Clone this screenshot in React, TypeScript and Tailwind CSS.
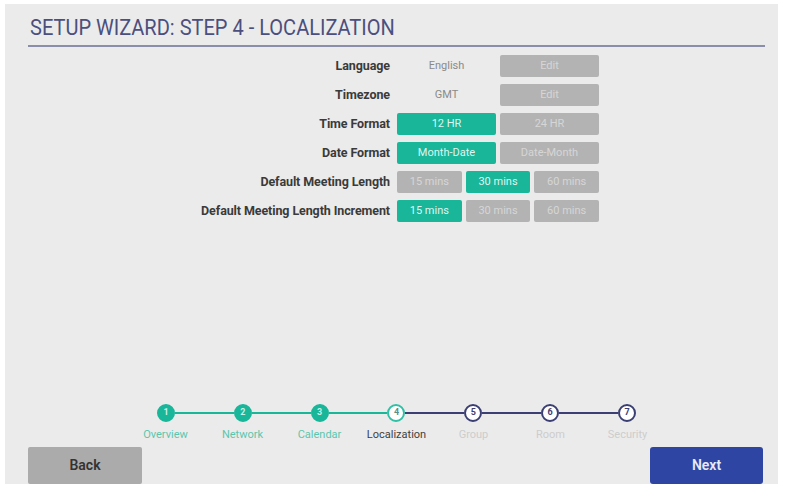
import React from "react";

const teal = "bg-[#19b69a] text-[#dff5ef]";
const gray = "bg-[#b3b3b3] text-[#d6d6d6]";

type Opt = { label: string; on?: boolean };

function Choice({ opts }: { opts: Opt[] }) {
  return (
    <div className={opts.length === 3 ? "grid grid-cols-3 gap-1" : "grid grid-cols-2 gap-1"}>
      {opts.map((o) => (
        <div
          key={o.label}
          className={`flex h-[22px] items-center justify-center rounded-[2px] text-[11px] ${o.on ? teal : gray}`}
        >
          {o.label}
        </div>
      ))}
    </div>
  );
}

function Row({ label, children }: { label: string; children: React.ReactNode }) {
  return (
    <div className="grid grid-cols-[362px_202px] items-center gap-[7px]">
      <div className="text-right text-[12.5px] font-bold tracking-[-0.1px] text-[#3a3a3a]">{label}</div>
      {children}
    </div>
  );
}

const steps = [
  { n: 1, name: "Overview", state: "done" },
  { n: 2, name: "Network", state: "done" },
  { n: 3, name: "Calendar", state: "done" },
  { n: 4, name: "Localization", state: "current" },
  { n: 5, name: "Group", state: "todo" },
  { n: 6, name: "Room", state: "todo" },
  { n: 7, name: "Security", state: "todo" },
];

function Dot({ n, state }: { n: number; state: string }) {
  const cls =
    state === "done"
      ? "bg-[#19b69a] border-[#19b69a] text-[#c9f0e5]"
      : state === "current"
        ? "bg-white border-[#2fc0a5] text-[#5a8f86]"
        : "bg-white border-[#3b3f73] text-[#3b3f73]";
  return (
    <div className={`flex h-[18px] w-[18px] shrink-0 items-center justify-center rounded-full border-2 text-[9px] font-bold ${cls}`}>
      {n}
    </div>
  );
}

export default function App() {
  return (
    <div
      className="h-[487px] w-[787px] bg-white pb-[3px] pl-[5px] pr-[9px] pt-[4px]"
      style={{ fontFamily: "Roboto, 'Liberation Sans', sans-serif" }}
    >
      <div className="flex h-full flex-col bg-[#ebebeb] pl-[23px] pr-[13px]">
        <div className="mt-[11px] border-b-2 border-[#8a8eab] pb-[4px] pl-[2px]">
          <h1 className="origin-left scale-x-[0.91] whitespace-nowrap text-[22px] leading-[26px] text-[#4b4f7e]">
            SETUP WIZARD: STEP 4 - LOCALIZATION
          </h1>
        </div>

        <div className="mt-[8px] flex flex-col gap-[7px]">
          <Row label="Language">
            <div className="grid grid-cols-2 gap-1">
              <div className="flex h-[22px] items-center justify-center text-[11px] text-[#8a8a8a]">English</div>
              <div className={`flex h-[22px] items-center justify-center rounded-[2px] text-[11px] ${gray}`}>Edit</div>
            </div>
          </Row>
          <Row label="Timezone">
            <div className="grid grid-cols-2 gap-1">
              <div className="flex h-[22px] items-center justify-center text-[11px] text-[#8a8a8a]">GMT</div>
              <div className={`flex h-[22px] items-center justify-center rounded-[2px] text-[11px] ${gray}`}>Edit</div>
            </div>
          </Row>
          <Row label="Time Format">
            <Choice opts={[{ label: "12 HR", on: true }, { label: "24 HR" }]} />
          </Row>
          <Row label="Date Format">
            <Choice opts={[{ label: "Month-Date", on: true }, { label: "Date-Month" }]} />
          </Row>
          <Row label="Default Meeting Length">
            <Choice opts={[{ label: "15 mins" }, { label: "30 mins", on: true }, { label: "60 mins" }]} />
          </Row>
          <Row label="Default Meeting Length Increment">
            <Choice opts={[{ label: "15 mins", on: true }, { label: "30 mins" }, { label: "60 mins" }]} />
          </Row>
        </div>

        <div className="flex-1" />

        <div className="flex flex-col items-center">
          <div className="flex w-[479px] items-center">
            {steps.map((s, i) => (
              <React.Fragment key={s.n}>
                <Dot n={s.n} state={s.state} />
                {i < steps.length - 1 && (
                  <div className={`h-[2px] flex-1 ${i < 3 ? "bg-[#19b69a]" : "bg-[#3b3f73]"}`} />
                )}
              </React.Fragment>
            ))}
          </div>
          <div className="mt-[6px] grid w-[539px] grid-cols-7 text-center text-[11px] leading-[14px]">
            {steps.map((s) => (
              <div
                key={s.n}
                className={
                  s.state === "done"
                    ? "text-[#5cc6ad]"
                    : s.state === "current"
                      ? "text-[#3f3f3f]"
                      : "text-[#cdcdcd]"
                }
              >
                {s.name}
              </div>
            ))}
          </div>
        </div>

        <div className="mt-[5px] flex justify-between pr-[2px]">
          <button className="h-[37px] w-[114px] rounded-[2px] bg-[#ababab] text-[14px] font-semibold text-[#333]">
            Back
          </button>
          <button className="h-[37px] w-[113px] rounded-[3px] bg-[#2f45a3] text-[14px] font-semibold text-[#e6e9f7]">
            Next
          </button>
        </div>
      </div>
    </div>
  );
}
